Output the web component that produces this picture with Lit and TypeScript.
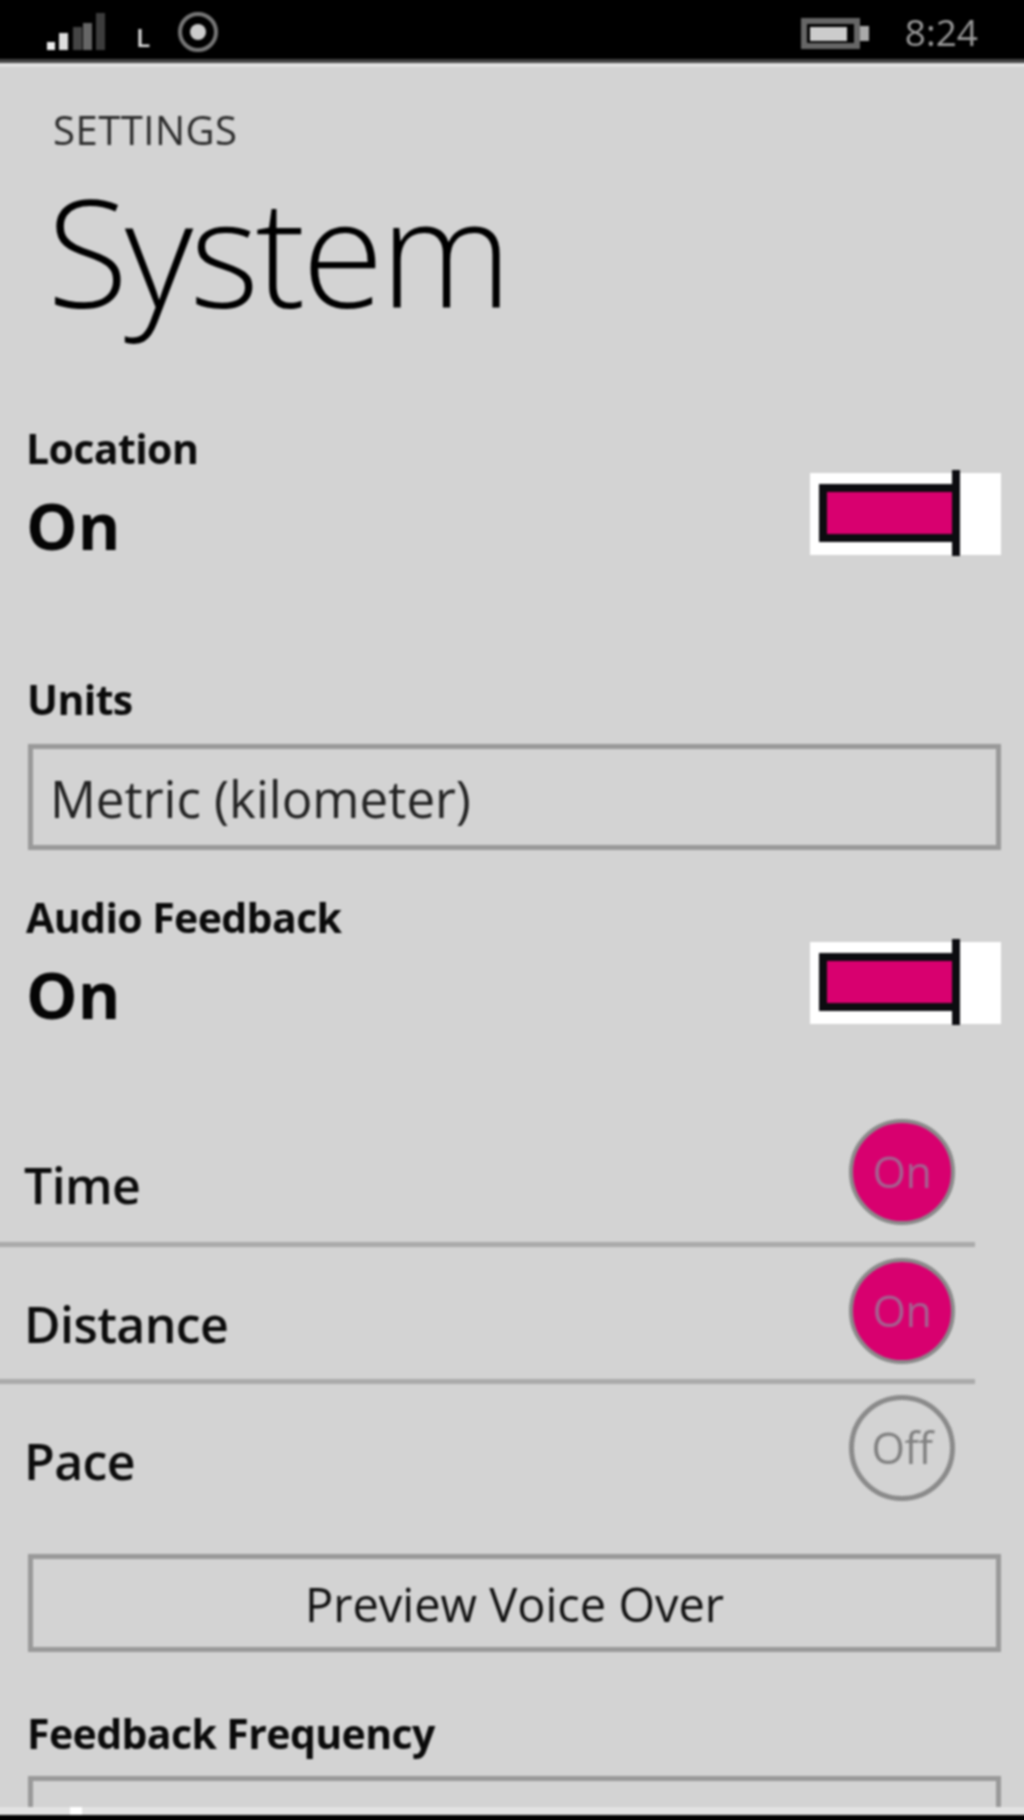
import { LitElement, html, css } from 'lit';
import { customElement } from 'lit/decorators.js';

@customElement('app-root')
export class AppRoot extends LitElement {
  static styles = css`
    :host {
      display: block;
      position: relative;
      width: 1024px;
      height: 1820px;
      overflow: hidden;
      background: #d3d3d3;
      color: #111;
      font-family: "Open Sans", "Noto Sans", sans-serif;
    }
    /* the reference is a soft upscale, bars bleed past the edge so the blur stays clean there */
    .page { display: flow-root; filter: blur(1px); height: 1820px; }

    .status {
      height: 59px;
      background: #000;
      border-top: 8px solid #000;
      border-bottom: 4px solid #444;
      box-shadow: 0 4px 0 #e2e2e2;
      display: flex;
      align-items: center;
      justify-content: space-between;
      margin: -8px -8px 0;
      padding: 0 54px;
    }
    .status-left, .status-right { display: flex; align-items: center; }
    .status-left { padding-top: 4px; }
    .net { color: #ddd; font-size: 26px; font-weight: 600; line-height: 30px; margin: 10px 20px 0 30px; }
    .ring { margin-left: 7px; }
    .battery { margin-top: 8px; }
    .clock { color: #999; font-size: 37px; line-height: 36px; margin: 4px 0 0 36px; }

    .header { padding: 45px 0 0 53px; margin-bottom: 88px; }
    .crumb { font-size: 40px; line-height: 44px; color: #2a2a2a; letter-spacing: 0.5px; }
    .title { font-size: 149px; font-weight: 300; line-height: 170px; letter-spacing: -3.5px; margin: 14px 0 0 -6px; color: #000; }

    .setting { display: flex; justify-content: space-between; padding: 0 23px 0 26px; height: 215px; }
    .label { font-size: 41px; font-weight: 700; line-height: 48px; letter-spacing: -0.6px; color: #0a0a0a; }
    .value { font-size: 65px; font-weight: 700; line-height: 70px; margin-top: 18px; color: #050505; }

    .toggle { position: relative; width: 191px; height: 82px; background: #fff; margin-top: 49px; }
    .track { width: 133px; height: 58px; margin-left: 9px; position: relative; top: 11px; background: #d8006f; border: 8px solid #0c0c10; border-right: 0; box-sizing: border-box; }
    .thumb { position: absolute; left: 142px; top: -3px; width: 8px; height: 86px; background: #0c0c10; }

    .field { margin: 36px 23px 0 28px; }
    .field .label { margin-left: -1px; }
    .box {
      border: 5px solid #999;
      box-sizing: border-box;
      height: 106px;
      margin-top: 21px;
      margin-bottom: 43px;
      font-size: 51px;
      line-height: 99px;
      padding-left: 17px;
      color: #222;
      overflow: hidden;
    }
    .box.empty { margin-top: 19px; }

    .check-row {
      display: flex;
      justify-content: space-between;
      align-items: flex-start;
      width: 983px;
      height: 137px;
      box-sizing: border-box;
      margin-left: -8px;
      padding: 11px 20px 0 32px;
    }
    .check-row.first { height: 139px; }
    .check-row.sep { border-bottom: 5px solid #aaa; }
    .name { font-size: 50px; font-weight: 600; line-height: 68px; margin-top: 32px; letter-spacing: -0.6px; color: #0c0c0c; }
    .circle {
      width: 106px;
      height: 106px;
      border-radius: 50%;
      border: 4px solid #8a8a8a;
      box-sizing: border-box;
      font-size: 43px;
      line-height: 97px;
      text-align: center;
      letter-spacing: -0.5px;
    }
    .circle.on { background: #d8006f; color: #a5608f; }
    .circle.off { color: #808080; border-width: 5px; line-height: 95px; }

    .button {
      margin: 33px 23px 0 28px;
      border: 5px solid #999;
      box-sizing: border-box;
      height: 98px;
      font-size: 47px;
      line-height: 91px;
      text-align: center;
      color: #111;
    }
    .button + .field { margin-top: 57px; }

    .bottom { position: absolute; left: -8px; right: -8px; bottom: -8px; height: 13px; background: #000; border-top: 8px solid #e2e2e2; }
    .speck { position: absolute; left: 70px; bottom: 5px; width: 12px; height: 8px; background: #fff; }
  `;

  private toggle() {
    return html`<div class="toggle"><div class="track"></div><div class="thumb"></div></div>`;
  }

  private check(name: string, on: boolean, sep: boolean, first = false) {
    return html`<div class="check-row ${sep ? 'sep' : ''} ${first ? 'first' : ''}">
      <span class="name">${name}</span>
      <div class="circle ${on ? 'on' : 'off'}">${on ? 'On' : 'Off'}</div>
    </div>`;
  }

  render() {
    return html`
      <div class="page">
        <div class="status">
          <div class="status-left">
            <svg width="60" height="44" viewBox="46 10 60 44">
              <rect x="47" y="42" width="8" height="8" fill="#eee"/>
              <rect x="59" y="33" width="9" height="17" fill="#ddd"/>
              <rect x="73" y="27" width="9" height="23" fill="#444"/>
              <rect x="83" y="23" width="9" height="27" fill="#666"/>
              <rect x="96" y="13" width="9" height="37" fill="#3c3c3c"/>
            </svg>
            <span class="net">L</span>
            <svg class="ring" width="42" height="42" viewBox="0 0 42 42">
              <circle cx="21" cy="21" r="18" fill="none" stroke="#777" stroke-width="4"/>
              <circle cx="21" cy="21" r="8" fill="#ccc"/>
            </svg>
          </div>
          <div class="status-right">
            <svg class="battery" width="68" height="32" viewBox="0 0 68 32">
              <rect x="3" y="3" width="53" height="25" fill="none" stroke="#666" stroke-width="6"/>
              <rect x="9" y="9" width="37" height="14" fill="#ccc"/>
              <rect x="59" y="8" width="9" height="15" fill="#aaa"/>
            </svg>
            <span class="clock">8:24</span>
          </div>
        </div>

        <div class="header">
          <div class="crumb">SETTINGS</div>
          <div class="title">System</div>
        </div>

        <div class="setting">
          <div>
            <div class="label">Location</div>
            <div class="value">On</div>
          </div>
          ${this.toggle()}
        </div>

        <div class="field">
          <div class="label">Units</div>
          <div class="box">Metric (kilometer)</div>
        </div>

        <div class="setting">
          <div>
            <div class="label">Audio Feedback</div>
            <div class="value">On</div>
          </div>
          ${this.toggle()}
        </div>

        ${this.check('Time', true, true, true)}
        ${this.check('Distance', true, true)}
        ${this.check('Pace', false, false)}

        <div class="button">Preview Voice Over</div>

        <div class="field">
          <div class="label">Feedback Frequency</div>
          <div class="box empty"></div>
        </div>
        <div class="bottom"></div>
        <div class="speck"></div>
      </div>
    `;
  }
}
